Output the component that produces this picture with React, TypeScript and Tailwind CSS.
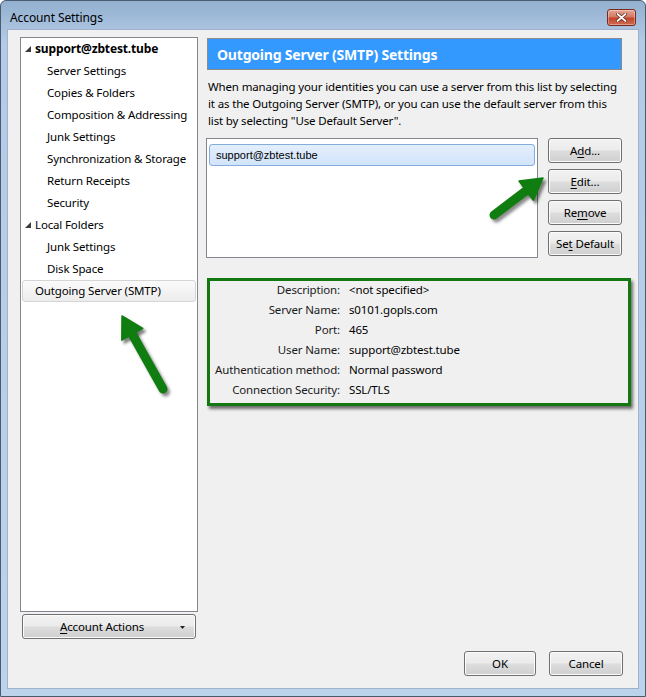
import React from 'react';

const FONT = "font-['Noto_Sans',sans-serif] text-[11.5px] tracking-[-0.15px]";

const BTN =
  "h-[25px] rounded-[3px] border border-[#707070] bg-[linear-gradient(#f2f2f2,#ebebeb_48%,#dddddd_52%,#cfcfcf)] shadow-[inset_0_0_0_1px_#fbfbfb] text-black flex items-center justify-center";

type TreeItem = { t: string; lvl: number; bold?: boolean; tri?: boolean; sel?: boolean };

const tree: TreeItem[] = [
  { t: 'support@zbtest.tube', lvl: 0, bold: true, tri: true },
  { t: 'Server Settings', lvl: 1 },
  { t: 'Copies & Folders', lvl: 1 },
  { t: 'Composition & Addressing', lvl: 1 },
  { t: 'Junk Settings', lvl: 1 },
  { t: 'Synchronization & Storage', lvl: 1 },
  { t: 'Return Receipts', lvl: 1 },
  { t: 'Security', lvl: 1 },
  { t: 'Local Folders', lvl: 0, tri: true },
  { t: 'Junk Settings', lvl: 1 },
  { t: 'Disk Space', lvl: 1 },
  { t: 'Outgoing Server (SMTP)', lvl: 0, sel: true },
];

const info: [string, string][] = [
  ['Description:', '<not specified>'],
  ['Server Name:', 's0101.gopls.com'],
  ['Port:', '465'],
  ['User Name:', 'support@zbtest.tube'],
  ['Authentication method:', 'Normal password'],
  ['Connection Security:', 'SSL/TLS'],
];

function Tri() {
  return (
    <svg width="6" height="6" viewBox="0 0 6 6" className="shrink-0">
      <polygon points="6,0 6,6 0,6" fill="#3c3c3c" />
    </svg>
  );
}

function Arrow({ tx, ty, px, py }: { tx: number; ty: number; px: number; py: number }) {
  const dx = px - tx;
  const dy = py - ty;
  const len = Math.hypot(dx, dy);
  const ux = dx / len;
  const uy = dy / len;
  const nx = -uy;
  const ny = ux;
  const hl = 21;
  const hw = 12;
  const bx = px - ux * hl;
  const by = py - uy * hl;
  const head = `${px},${py} ${bx + nx * hw},${by + ny * hw} ${bx - nx * hw},${by - ny * hw}`;
  const shape = (fill: string, ox: number, oy: number, extra?: string) => (
    <g transform={`translate(${ox},${oy})`} filter={extra}>
      <line x1={tx} y1={ty} x2={bx + ux * 2} y2={by + uy * 2} stroke={fill} strokeWidth="9" strokeLinecap="round" />
      <polygon points={head} fill={fill} strokeLinejoin="round" stroke={fill} strokeWidth="1.5" />
    </g>
  );
  return (
    <>
      {shape('rgba(0,0,0,0.45)', 2.5, 3, 'url(#blur)')}
      {shape('#0f7d0f', 0, 0)}
    </>
  );
}

export default function App() {
  return (
    <div className={`${FONT} relative w-[646px] h-[697px] overflow-hidden`}>
      <div className="w-full h-full flex flex-col rounded-t-[6px] border border-[#4a5b70] bg-[linear-gradient(#93b0d0,#b3cbe6_6%,#bcd3ec)]">
        {/* title bar */}
        <div className="h-[28px] shrink-0 flex items-center pl-[9px] pr-[9px]">
          <span className="text-[12px] tracking-[-0.1px] text-black pt-[6px]">Account Settings</span>
          <div className="ml-auto mt-[5px] w-[29px] h-[17px] rounded-[3px] border border-[#7a2a1c] bg-[linear-gradient(#e6a595,#d47a65_45%,#c1452c_55%,#cf6a4f)] shadow-[inset_0_0_0_1px_rgba(255,255,255,0.35)] flex items-center justify-center">
            <svg width="11" height="9" viewBox="0 0 11 9">
              <path d="M1.5 1 L9.5 8 M9.5 1 L1.5 8" stroke="#5a2015" strokeWidth="3.2" strokeLinecap="round" />
              <path d="M1.5 1 L9.5 8 M9.5 1 L1.5 8" stroke="#ffffff" strokeWidth="1.8" strokeLinecap="round" />
            </svg>
          </div>
        </div>

        {/* client */}
        <div className="flex-1 mx-[6px] mb-[7px] bg-[#f0f0f0] border border-[#9fb2c9] flex flex-col">
          <div className="flex pt-[7px] pl-[12px]">
            {/* left column */}
            <div className="w-[178px] flex flex-col">
              <div className="h-[575px] bg-white border border-[#828790]">
                {tree.map((it, i) =>
                  it.sel ? (
                    <div key={i} className="mx-[1px] h-[22px] flex items-center pl-[12px] rounded-[3px] border border-[#d5d5d5] bg-[linear-gradient(#fbfbfb,#ececec)] text-black">
                      {it.t}
                    </div>
                  ) : (
                    <div
                      key={i}
                      className={`h-[22px] flex items-center whitespace-nowrap text-black ${it.lvl === 0 ? 'pl-[4px] gap-[4px]' : 'pl-[26px]'} ${it.bold ? 'font-bold text-[12px]' : ''}`}
                    >
                      {it.tri && <Tri />}
                      <span>{it.t}</span>
                    </div>
                  )
                )}
              </div>
              <div className={`${BTN} mt-[2px] mx-[2px] relative`}>
                <span className="pr-[14px]">
                  <span className="underline underline-offset-2">A</span>ccount Actions
                </span>
                <svg width="5" height="3" viewBox="0 0 5 3" className="absolute right-[10px] top-[11px]">
                  <polygon points="0,0 5,0 2.5,3" fill="#222" />
                </svg>
              </div>
            </div>

            {/* right column */}
            <div className="ml-[8px] w-[425px] flex flex-col">
              <div className="mt-[1px] ml-[1px] w-[415px] h-[32px] bg-[#3399ff] border border-[#8a8a8a] flex items-center pl-[9px]">
                <span className="text-white font-bold text-[14px] tracking-[-0.2px]">Outgoing Server (SMTP) Settings</span>
              </div>
              <p className="mt-[8px] pl-[2px] w-[418px] leading-[17px] text-black">
                When managing your identities you can use a server from this list by selecting it as the Outgoing Server (SMTP), or you can use the default server from this list by selecting "Use Default Server".
              </p>
              <div className="mt-[9px] flex gap-[10px]">
                <div className="w-[332px] h-[120px] bg-white border border-[#828790]">
                  <div className="mx-[2px] mt-[5px] h-[22px] rounded-[3px] border border-[#84acdd] bg-[linear-gradient(#e3eefc,#d2e4fb)] flex items-center pl-[6px] font-['Liberation_Sans',sans-serif] text-[11px] tracking-normal text-black">
                    support@zbtest.tube
                  </div>
                </div>
                <div className="w-[74px] flex flex-col gap-[6px]">
                  <div className={BTN}>
                    <span>
                      A<span className="underline underline-offset-2">d</span>d...
                    </span>
                  </div>
                  <div className={BTN}>
                    <span>
                      <span className="underline underline-offset-2">E</span>dit...
                    </span>
                  </div>
                  <div className={BTN}>
                    <span>
                      Re<span className="underline underline-offset-2">m</span>ove
                    </span>
                  </div>
                  <div className={BTN}>
                    <span>
                      Se<span className="underline underline-offset-2">t</span> Default
                    </span>
                  </div>
                </div>
              </div>
              <div className="mt-[20px] ml-[1px] w-[424px] h-[128px] border-[3px] border-[#127812] shadow-[2px_3px_3px_rgba(0,0,0,0.55)] -mb-[0px]">
                <div className="-mt-[1px]">
                  {info.map(([k, v], i) => (
                    <div key={i} className="h-[20px] flex items-center whitespace-nowrap">
                      <span className="w-[130px] text-right text-[#1a1a1a]">{k}</span>
                      <span className="ml-[9px] text-black">{v}</span>
                    </div>
                  ))}
                </div>
              </div>
            </div>
          </div>

          <div className="mt-auto mb-[12px] flex justify-end gap-[13px] pr-[15px]">
            <div className={`${BTN} w-[72px] border-[#3c7fb1] shadow-[inset_0_0_0_1px_#c0e4f8]`}>OK</div>
            <div className={`${BTN} w-[74px]`}>Cancel</div>
          </div>
        </div>
      </div>

      {/* annotation arrows */}
      <svg className="absolute inset-0 pointer-events-none" width="646" height="697" viewBox="0 0 646 697">
        <defs>
          <filter id="blur" x="-20%" y="-20%" width="140%" height="140%">
            <feGaussianBlur stdDeviation="1.5" />
          </filter>
        </defs>
        <Arrow tx={494} ty={215} px={543} py={178} />
        <Arrow tx={163} ty={389} px={122} py={316} />
      </svg>
    </div>
  );
}
